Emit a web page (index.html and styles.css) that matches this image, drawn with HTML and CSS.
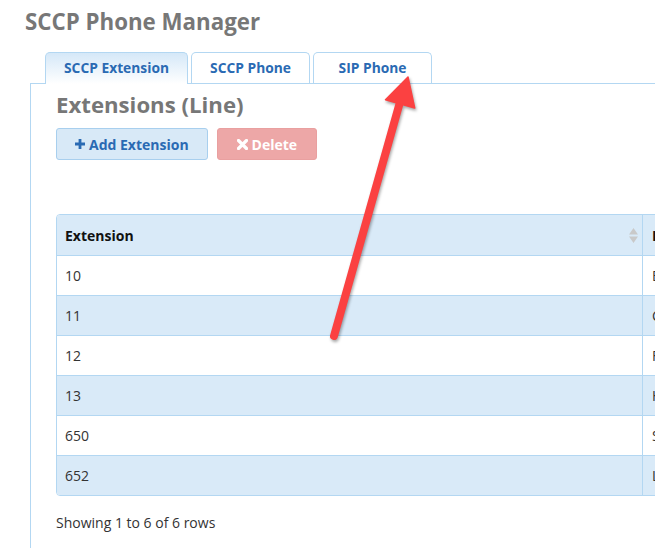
FILE: index.html
```html
<!DOCTYPE html>
<html lang="en">
<head>
<meta charset="utf-8">
<title>SCCP Phone Manager</title>
<link rel="stylesheet" href="styles.css">
</head>
<body>
<div class="page">
  <h1 class="title">SCCP Phone Manager</h1>
  <div class="tabbed">
    <ul class="tabs">
      <li class="tab active">SCCP Extension</li>
      <li class="tab">SCCP Phone</li>
      <li class="tab">SIP Phone</li>
    </ul>
    <div class="panel">
      <h2 class="heading">Extensions (Line)</h2>
      <div class="toolbar">
        <button class="btn btn-add"><span class="ico">
          <svg width="10" height="10" viewBox="0 0 10 10"><path d="M3.6 0h2.8v3.6H10v2.8H6.4V10H3.6V6.4H0V3.6h3.6z" fill="currentColor"/></svg>
        </span>Add Extension</button>
        <button class="btn btn-delete"><span class="ico">
          <svg width="11" height="11" viewBox="0 0 11 11"><path d="M1.5 1.5 9.5 9.5M9.5 1.5 1.5 9.5" stroke="currentColor" stroke-width="3.2" stroke-linecap="round" fill="none"/></svg>
        </span>Delete</button>
      </div>
      <div class="table-wrap">
        <table class="grid">
          <thead>
            <tr>
              <th class="col-ext"><div class="th-inner"><span>Extension</span>
                <svg class="sort" width="9" height="15" viewBox="0 0 9 15"><path d="M4.5 0 9 6.5H0z M4.5 15 0 8.5h9z" fill="#c9c9c9"/></svg></div></th>
              <th class="col-label">Label</th>
            </tr>
          </thead>
          <tbody>
            <tr><td class="col-ext">10</td><td class="col-label">Bob Smith</td></tr>
            <tr class="alt"><td class="col-ext">11</td><td class="col-label">Carol</td></tr>
            <tr><td class="col-ext">12</td><td class="col-label">Frank</td></tr>
            <tr class="alt"><td class="col-ext">13</td><td class="col-label">Henry</td></tr>
            <tr><td class="col-ext">650</td><td class="col-label">Sam</td></tr>
            <tr class="alt last"><td class="col-ext">652</td><td class="col-label">Lisa</td></tr>
          </tbody>
        </table>
      </div>
      <div class="info">Showing 1 to 6 of 6 rows</div>
    </div>
  </div>
</div>
<svg class="arrow" width="655" height="548" viewBox="0 0 655 548">
  <line x1="334" y1="336" x2="400" y2="102" stroke="#fb4141" stroke-width="8" stroke-linecap="round"/>
  <polygon points="408,77 385.5,99.8 414.7,108" fill="#fb4141" stroke="#fb4141" stroke-width="1.5" stroke-linejoin="round"/>
</svg>
</body>
</html>
```
FILE: styles.css
```css
html, body {
  margin: 0;
  padding: 0;
  background: #fff;
  overflow: hidden;
}
body {
  font-family: "Open Sans", "Liberation Sans", sans-serif;
  color: #333;
  width: 655px;
  height: 548px;
  position: relative;
}
.page {
  padding-left: 25px;
}
.title {
  margin: 6px 0 0 0;
  font-size: 22.3px;
  line-height: 32px;
  font-weight: 700;
  color: #777;
}
.tabbed {
  margin-top: 14px;
  margin-left: 5px;
}
.tabs {
  list-style: none;
  margin: 0;
  padding: 0 0 0 15px;
  display: flex;
  align-items: flex-start;
  gap: 3px;
  height: 31px;
}
.tab {
  box-sizing: border-box;
  min-width: 119px;
  text-align: center;
  height: 31px;
  line-height: 30px;
  padding: 0 18px;
  border: 1px solid #b3d7f2;
  border-bottom: none;
  border-radius: 5px 5px 0 0;
  background: #fff;
  color: #2a6ab3;
  font-size: 13.8px;
  font-weight: 700;
  white-space: nowrap;
}
.tab.active {
  height: 32px;
  margin-bottom: -1px;
  position: relative;
  z-index: 1;
  background: linear-gradient(#d5e8f8, #fff);
}
.panel {
  border-top: 1px solid #b3d7f2;
  border-left: 1px solid #b3d7f2;
  padding-left: 25px;
  height: 470px;
}
.heading {
  margin: 5px 0 0 0;
  font-size: 22.2px;
  line-height: 32px;
  font-weight: 700;
  color: #777;
}
.toolbar {
  margin-top: 7px;
  display: flex;
  gap: 9px;
}
.btn {
  height: 32px;
  box-sizing: border-box;
  border-radius: 3px;
  font-family: "Open Sans", "Liberation Sans", sans-serif;
  font-size: 14px;
  font-weight: 700;
  display: flex;
  align-items: center;
  padding: 0 18px;
  cursor: pointer;
}
.btn .ico {
  display: inline-flex;
  margin-right: 4px;
}
.btn-add {
  background: #d8e9f7;
  border: 1px solid #a8cfee;
  color: #2a6ab3;
}
.btn-delete {
  background: #eda7a7;
  border: 1px solid #e9a0a0;
  color: #fff;
  padding: 0 19px 0 19px;
}
.table-wrap {
  margin-top: 54px;
  width: 900px;
  border: 1px solid #b3d7f2;
  border-radius: 4px;
  overflow: hidden;
}
.grid {
  border-collapse: separate;
  border-spacing: 0;
  width: 100%;
  font-size: 14px;
}
.grid th, .grid td {
  text-align: left;
  padding: 0 8px;
  border-bottom: 1px solid #b3d7f2;
}
.grid th {
  height: 40px;
  background: #d9eaf8;
  color: #111;
  font-weight: 700;
}
.grid td {
  height: 39px;
  color: #333;
}
.grid tr.alt td {
  background: #d9eaf8;
}
.grid tr.last td {
  border-bottom: none;
}
.grid .col-ext {
  width: 569px;
  border-right: 1px solid #b3d7f2;
}
.grid .col-label {
  padding-left: 9px;
}
.th-inner {
  display: flex;
  justify-content: space-between;
  align-items: center;
}
.sort {
  margin-right: -4px;
}
.info {
  margin-top: 17px;
  font-size: 14px;
  line-height: 20px;
  color: #333;
}
.arrow {
  position: absolute;
  left: 0;
  top: 0;
  pointer-events: none;
  filter: drop-shadow(1px 2px 1.5px rgba(0, 0, 0, 0.35));
}
```
